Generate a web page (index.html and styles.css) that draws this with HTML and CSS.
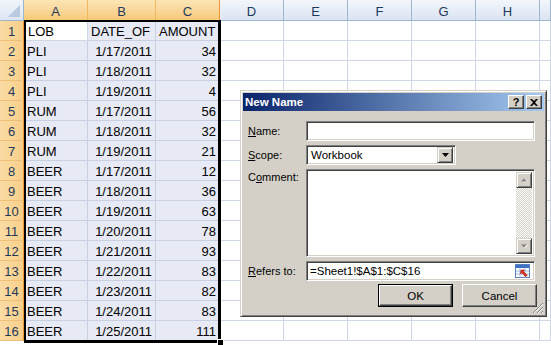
FILE: index.html
```html
<!DOCTYPE html>
<html>
<head>
<meta charset="utf-8">
<link rel="stylesheet" href="styles.css">
</head>
<body>
<div class="sheet">
  <div class="corner"><span class="tri"></span></div>
  <div class="ch sel">A</div><div class="ch sel">B</div><div class="ch sel lastsel">C</div>
  <div class="ch">D</div><div class="ch">E</div><div class="ch">F</div><div class="ch">G</div><div class="ch">H</div><div class="ch"></div>

  <div class="rh">1</div><div class="c active">LOB</div><div class="c s">DATE_OF</div><div class="c s">AMOUNT</div><div class="c"></div><div class="c"></div><div class="c"></div><div class="c"></div><div class="c"></div><div class="c"></div>
  <div class="rh">2</div><div class="c s">PLI</div><div class="c s r">1/17/2011</div><div class="c s r">34</div><div class="c"></div><div class="c"></div><div class="c"></div><div class="c"></div><div class="c"></div><div class="c"></div>
  <div class="rh">3</div><div class="c s">PLI</div><div class="c s r">1/18/2011</div><div class="c s r">32</div><div class="c"></div><div class="c"></div><div class="c"></div><div class="c"></div><div class="c"></div><div class="c"></div>
  <div class="rh">4</div><div class="c s">PLI</div><div class="c s r">1/19/2011</div><div class="c s r">4</div><div class="c"></div><div class="c"></div><div class="c"></div><div class="c"></div><div class="c"></div><div class="c"></div>
  <div class="rh">5</div><div class="c s">RUM</div><div class="c s r">1/17/2011</div><div class="c s r">56</div><div class="c"></div><div class="c"></div><div class="c"></div><div class="c"></div><div class="c"></div><div class="c"></div>
  <div class="rh">6</div><div class="c s">RUM</div><div class="c s r">1/18/2011</div><div class="c s r">32</div><div class="c"></div><div class="c"></div><div class="c"></div><div class="c"></div><div class="c"></div><div class="c"></div>
  <div class="rh">7</div><div class="c s">RUM</div><div class="c s r">1/19/2011</div><div class="c s r">21</div><div class="c"></div><div class="c"></div><div class="c"></div><div class="c"></div><div class="c"></div><div class="c"></div>
  <div class="rh">8</div><div class="c s">BEER</div><div class="c s r">1/17/2011</div><div class="c s r">12</div><div class="c"></div><div class="c"></div><div class="c"></div><div class="c"></div><div class="c"></div><div class="c"></div>
  <div class="rh">9</div><div class="c s">BEER</div><div class="c s r">1/18/2011</div><div class="c s r">36</div><div class="c"></div><div class="c"></div><div class="c"></div><div class="c"></div><div class="c"></div><div class="c"></div>
  <div class="rh">10</div><div class="c s">BEER</div><div class="c s r">1/19/2011</div><div class="c s r">63</div><div class="c"></div><div class="c"></div><div class="c"></div><div class="c"></div><div class="c"></div><div class="c"></div>
  <div class="rh">11</div><div class="c s">BEER</div><div class="c s r">1/20/2011</div><div class="c s r">78</div><div class="c"></div><div class="c"></div><div class="c"></div><div class="c"></div><div class="c"></div><div class="c"></div>
  <div class="rh">12</div><div class="c s">BEER</div><div class="c s r">1/21/2011</div><div class="c s r">93</div><div class="c"></div><div class="c"></div><div class="c"></div><div class="c"></div><div class="c"></div><div class="c"></div>
  <div class="rh">13</div><div class="c s">BEER</div><div class="c s r">1/22/2011</div><div class="c s r">83</div><div class="c"></div><div class="c"></div><div class="c"></div><div class="c"></div><div class="c"></div><div class="c"></div>
  <div class="rh">14</div><div class="c s">BEER</div><div class="c s r">1/23/2011</div><div class="c s r">82</div><div class="c"></div><div class="c"></div><div class="c"></div><div class="c"></div><div class="c"></div><div class="c"></div>
  <div class="rh">15</div><div class="c s">BEER</div><div class="c s r">1/24/2011</div><div class="c s r">83</div><div class="c"></div><div class="c"></div><div class="c"></div><div class="c"></div><div class="c"></div><div class="c"></div>
  <div class="rh">16</div><div class="c s">BEER</div><div class="c s r">1/25/2011</div><div class="c s r">111</div><div class="c"></div><div class="c"></div><div class="c"></div><div class="c"></div><div class="c"></div><div class="c"></div>
</div>

<div class="selection"><span class="handle"></span></div>

<div class="dialog">
  <div class="titlebar">
    <span class="title">New Name</span>
    <div class="tb-buttons">
      <span class="tbtn q">?</span>
      <span class="tbtn"><svg width="8" height="7" viewBox="0 0 8 7"><path d="M0 0h2l2 2 2-2h2L5 3.5 8 7H6L4 5 2 7H0l3-3.5z" fill="#000"/></svg></span>
    </div>
  </div>
  <div class="form">
    <div class="lbl"><u>N</u>ame:</div>
    <div class="field"></div>
    <div class="lbl"><u>S</u>cope:</div>
    <div class="field select"><span class="val">Workbook</span><span class="dd raised"><svg width="7" height="4" viewBox="0 0 7 4"><path d="M0 0h7L3.5 4z" fill="#000"/></svg></span></div>
    <div class="lbl top">C<u>o</u>mment:</div>
    <div class="field area">
      <div class="vscroll">
        <span class="sbtn raised"><svg width="7" height="5" viewBox="0 0 7 5"><path d="M1 4h6L4 1z" fill="#fff"/><path d="M0 3.5h6L3 0.5z" fill="#808080"/></svg></span>
        <span class="track"></span>
        <span class="sbtn raised"><svg width="7" height="5" viewBox="0 0 7 5"><path d="M1 1h6L4 4z" fill="#fff"/><path d="M0 0.5h6L3 3.5z" fill="#808080"/></svg></span>
      </div>
    </div>
    <div class="lbl"><u>R</u>efers to:</div>
    <div class="field ref"><span class="val">=Sheet1!$A$1:$C$16</span>
      <svg class="collapse" width="16" height="15" viewBox="0 0 16 15">
        <rect x="0.5" y="0.5" width="14" height="13" fill="#fff" stroke="#5a7fb8"/>
        <rect x="1" y="1" width="13" height="3" fill="#3d6fc4"/>
        <path d="M1 7h13M1 10h13M5 4v10M10 4v10" stroke="#9fb7dc" stroke-width="1"/>
        <path d="M6 6l3.5 0 -1.2 1.2 4 4 -1.6 1.6 -4 -4 -1.2 1.2z" fill="#e03020" stroke="#9c1a10" stroke-width="0.6"/>
      </svg>
    </div>
  </div>
  <div class="buttons">
    <div class="btn default"><span class="btn-in">OK</span></div>
    <div class="btn"><span class="btn-in">Cancel</span></div>
  </div>
  <svg class="grip" width="12" height="12" viewBox="0 0 12 12">
    <path d="M11 1L1 11M11 5L5 11M11 9L9 11" stroke="#808080" stroke-width="1"/>
    <path d="M11 2L2 11M11 6L6 11M11 10L10 11" stroke="#fff" stroke-width="1"/>
  </svg>
</div>
</body>
</html>
```

FILE: styles.css
```css
html, body {
  margin: 0;
  padding: 0;
  width: 551px;
  height: 345px;
  overflow: hidden;
  background: #fff;
  font-family: "Liberation Sans", Arial, sans-serif;
}

.sheet {
  display: grid;
  grid-template-columns: 24px 64px 68px 64px 64px 64px 64px 64px 64px 11px;
  grid-template-rows: 21px repeat(16, 20px);
  font-size: 13px;
  color: #000;
}

.corner {
  position: relative;
  box-sizing: border-box;
  background: linear-gradient(#f1f5fb, #dde6f3);
  border-right: 1px solid #9eb6ce;
  border-bottom: 1px solid #9eb6ce;
}
.corner .tri {
  position: absolute;
  right: 3px;
  bottom: 3px;
  width: 0;
  height: 0;
  border-left: 12px solid transparent;
  border-bottom: 12px solid #b9c9df;
}

.ch {
  box-sizing: border-box;
  height: 21px;
  background: linear-gradient(#f3f6fb 0%, #e6edf7 50%, #dbe4f1 100%);
  border-right: 1px solid #9eb6ce;
  border-bottom: 1px solid #9eb6ce;
  text-align: center;
  color: #1e395b;
  padding-top: 4px;
  line-height: 16px;
}
.ch.sel {
  background: linear-gradient(#fce5b5 0%, #f9d79a 50%, #f6c977 100%);
  border-right-color: #f0b860;
  border-bottom: 1px solid #f29536;
  color: #1e395b;
}
.ch.lastsel {
  border-right-color: #f29536;
}

.rh {
  box-sizing: border-box;
  background: linear-gradient(90deg, #fbdca4, #f8cf8a);
  border-right: 1px solid #f29536;
  border-bottom: 1px solid #eec07a;
  text-align: center;
  color: #1e395b;
  padding-top: 3px;
  line-height: 16px;
}

.c {
  box-sizing: border-box;
  border-right: 1px solid #d0d7e5;
  border-bottom: 1px solid #d0d7e5;
  padding: 3px 3px 0 3px;
  line-height: 16px;
  white-space: nowrap;
  overflow: hidden;
}
.c.s {
  background: #e7eaf4;
  border-right-color: #c9d0e2;
  border-bottom-color: #c9d0e2;
}
.c.active {
  background: #fff;
  padding-left: 4px;
}
.c.r {
  text-align: right;
}

.selection {
  position: absolute;
  left: 24px;
  top: 20px;
  width: 192px;
  height: 318px;
  border-style: solid;
  border-color: #000;
  border-width: 2px 3px 3px 2px;
  pointer-events: none;
}
.handle {
  position: absolute;
  right: -6px;
  bottom: -6px;
  width: 5px;
  height: 5px;
  background: #000;
  border: 1px solid #fff;
}

/* Dialog */
.dialog {
  position: absolute;
  left: 240px;
  top: 90px;
  width: 307px;
  height: 227px;
  box-sizing: border-box;
  background: #d4d0c8;
  border: 1px solid;
  border-color: #d4d0c8 #404040 #404040 #d4d0c8;
  box-shadow: inset 1px 1px #fff, inset -1px -1px #808080;
  padding: 2px;
  font-size: 11px;
  color: #000;
}

.titlebar {
  display: flex;
  align-items: center;
  justify-content: space-between;
  height: 18px;
  background: linear-gradient(90deg, #0a246a, #a6caf0);
  padding: 0 2px 0 2px;
}
.title {
  color: #fff;
  font-weight: bold;
  font-size: 11.5px;
}
.tb-buttons {
  display: flex;
  gap: 2px;
}
.tbtn {
  box-sizing: border-box;
  width: 16px;
  height: 14px;
  display: flex;
  align-items: center;
  justify-content: center;
  background: #d4d0c8;
  border: 1px solid;
  border-color: #fff #404040 #404040 #fff;
  box-shadow: inset -1px -1px #808080;
  font-weight: bold;
  font-size: 11px;
  line-height: 12px;
}
.tbtn.q {
  padding-bottom: 1px;
}

.raised {
  box-sizing: border-box;
  background: #d4d0c8;
  border: 1px solid;
  border-color: #d4d0c8 #404040 #404040 #d4d0c8;
  box-shadow: inset 1px 1px #fff, inset -1px -1px #808080;
  display: flex;
  align-items: center;
  justify-content: center;
}

.form {
  display: grid;
  grid-template-columns: 58px 229px;
  grid-template-rows: 20px 20px 88px 20px;
  row-gap: 4px;
  margin: 10px 0 0 5px;
}
.lbl {
  display: flex;
  align-items: center;
  white-space: nowrap;
}
.lbl.top {
  align-items: flex-start;
  padding-top: 2px;
}
.lbl u {
  text-decoration-thickness: 1px;
  text-underline-offset: 1px;
}

.field {
  box-sizing: border-box;
  background: #fff;
  border: 1px solid;
  border-color: #808080 #fff #fff #808080;
  box-shadow: inset 1px 1px #404040, inset -1px -1px #d4d0c8;
  display: flex;
  align-items: center;
  padding: 2px;
}
.field .val {
  flex: 1;
  padding-left: 1px;
  white-space: nowrap;
}
.field.select {
  width: 150px;
}
.field.select .val {
  padding-left: 2px;
  font-size: 11.5px;
}
.dd {
  width: 16px;
  height: 16px;
}

.field.area {
  justify-content: flex-end;
  align-items: stretch;
}
.vscroll {
  width: 16px;
  display: flex;
  flex-direction: column;
}
.sbtn {
  width: 16px;
  height: 16px;
  flex: none;
}
.track {
  flex: 1;
  background: repeating-conic-gradient(#d4d0c8 0 25%, #fff 0 50%) 0 0 / 2px 2px;
}

.field.ref .val {
  font-size: 11.5px;
}
.collapse {
  margin-right: 1px;
}

.buttons {
  display: flex;
  justify-content: flex-end;
  gap: 9px;
  margin: 3px 7px 0 0;
}
.btn {
  box-sizing: border-box;
  width: 75px;
  height: 23px;
  display: flex;
}
.btn-in {
  flex: 1;
  box-sizing: border-box;
  background: #d4d0c8;
  border: 1px solid;
  border-color: #fff #404040 #404040 #fff;
  box-shadow: inset -1px -1px #808080;
  display: flex;
  align-items: center;
  justify-content: center;
  font-size: 11.5px;
}
.btn.default {
  border: 1px solid #000;
}

.grip {
  position: absolute;
  right: 2px;
  bottom: 2px;
}
```
